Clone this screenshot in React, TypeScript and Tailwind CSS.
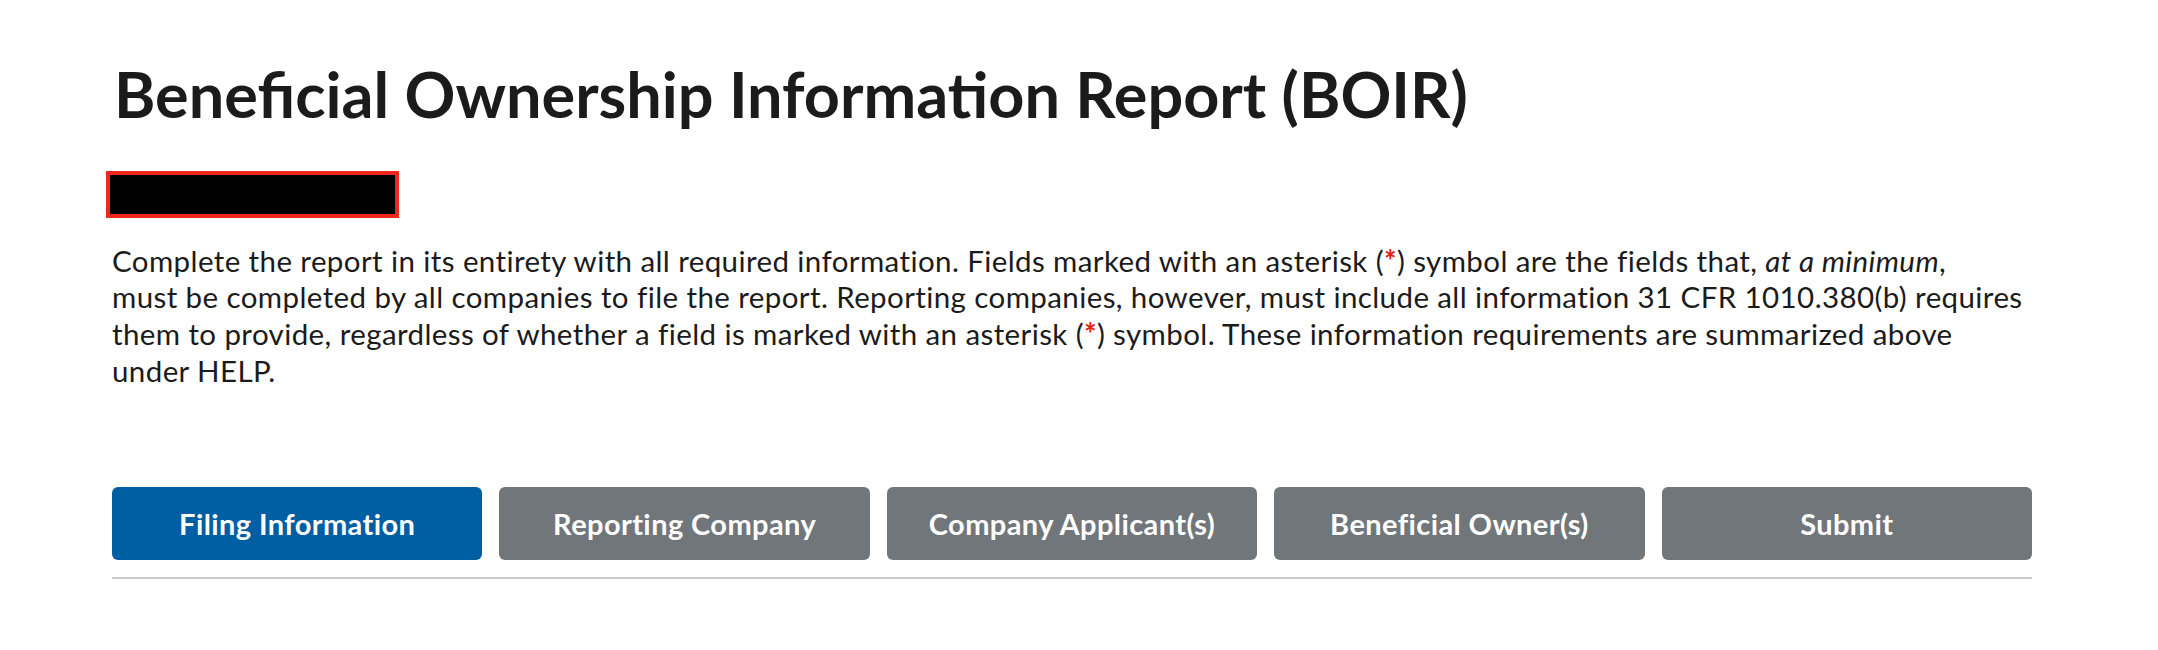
import React from "react";

const tabs = [
  { label: "Filing Information", active: true },
  { label: "Reporting Company", active: false },
  { label: "Company Applicant(s)", active: false },
  { label: "Beneficial Owner(s)", active: false },
  { label: "Submit", active: false },
];

export default function App() {
  return (
    <div className="min-h-[650px] w-full bg-white text-[#1b1b1b]" style={{ fontFamily: "Lato, 'Noto Sans', sans-serif" }}>
      <div className="w-[1920px] pl-[112px] box-content pt-[56px]">
        <h1 className="text-[63px] font-bold leading-[1.2] pl-[2px]">
          Beneficial Ownership Information Report (BOIR)
        </h1>
        <div className="mt-[39px] ml-[-6px] h-[47px] w-[293px] border-[4px] border-[#f0281c] bg-black" />
        <p className="mt-[25px] text-[29.5px] leading-[36.7px] tracking-[0.4px] whitespace-nowrap">
          Complete the report in its entirety with all required information. Fields marked with an asterisk (<span className="text-[#e52207] font-bold">*</span>) symbol are the fields that, <em>at a minimum</em>,
          <br />
          must be completed by all companies to file the report. Reporting companies, however, must include all information 31 CFR 1010.380(b) requires
          <br />
          them to provide, regardless of whether a field is marked with an asterisk (<span className="text-[#e52207] font-bold">*</span>) symbol. These information requirements are summarized above
          <br />
          under HELP.
        </p>
        <div className="mt-[98px] grid grid-cols-5 gap-[17px]">
          {tabs.map((t) => (
            <button
              key={t.label}
              className={
                t.active
                  ? "h-[73px] rounded-[6px] bg-[#005ea2] text-white text-[29px] tracking-[0.4px] font-bold"
                  : "h-[73px] rounded-[6px] bg-[#71767a] text-white text-[29px] tracking-[0.4px] font-bold"
              }
            >
              {t.label}
            </button>
          ))}
        </div>
        <div className="mt-[17px] h-[2px] bg-[#c9cbcd]" />
      </div>
    </div>
  );
}
